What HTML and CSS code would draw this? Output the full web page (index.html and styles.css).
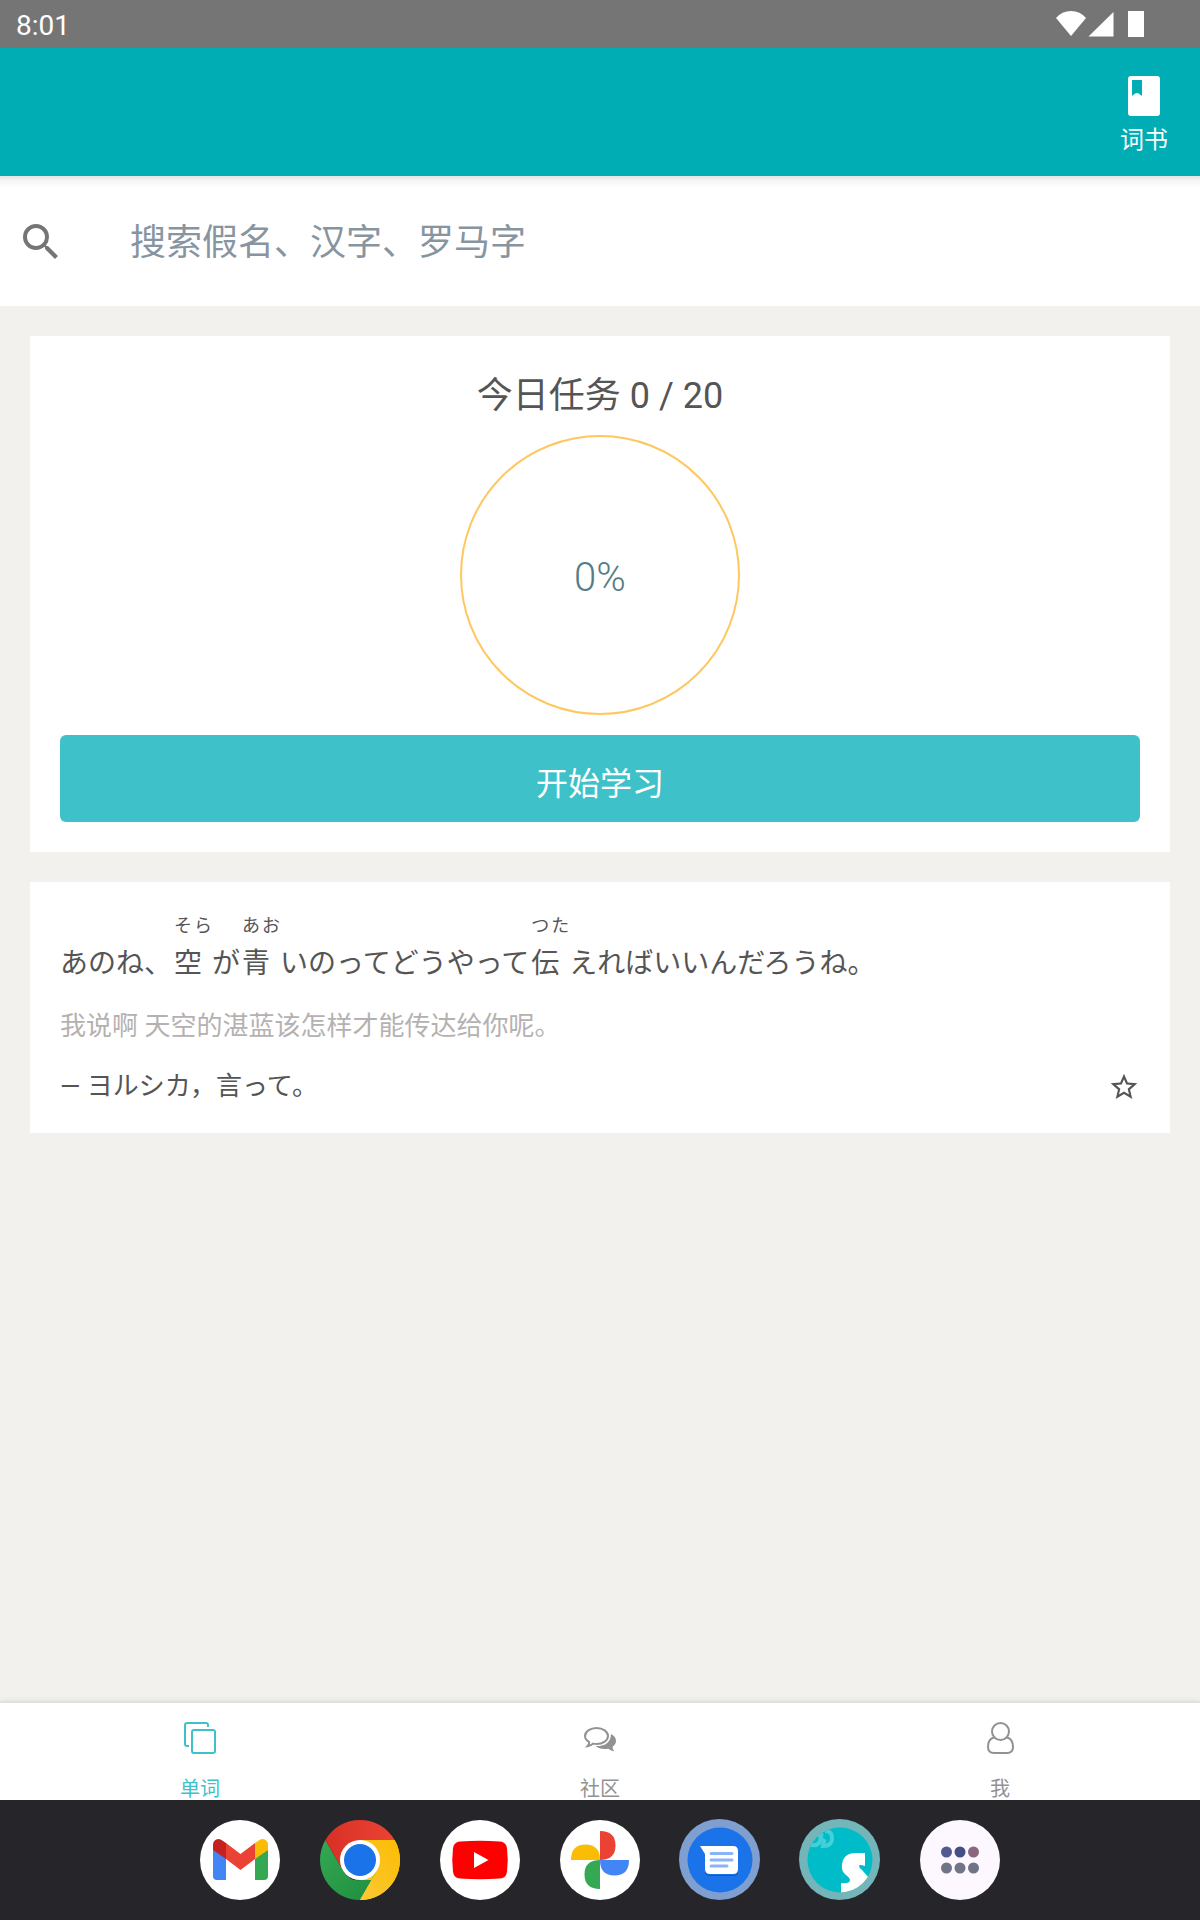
FILE: index.html
```html
<!DOCTYPE html>
<html lang="zh-CN">
<head>
<meta charset="utf-8">
<meta name="viewport" content="width=device-width, initial-scale=1">
<title>单词</title>
<link rel="stylesheet" href="styles.css">
</head>
<body>
<div class="status">
  <time class="clock">8:01</time>
  <svg class="status-icons" width="88" height="26" viewBox="0 0 88 26" fill="#fff" aria-hidden="true">
    <path d="M15 25 0 7Q6 0 15 0T30 7Z"/>
    <path d="M32.500 25.500 57.500 1v24.500Z"/>
    <path d="M72 0h16v26H72z"/>
  </svg>
</div>
<header class="appbar">
  <a class="book-link" href="#books">
    <svg width="48" height="48" viewBox="0 0 24 24" fill="#fff" aria-hidden="true"><path d="M18.500 2h-13Q4 2 4 3.500v17Q4 22 5.500 22h13q1.500 0 1.500-1.500v-17Q20 2 18.500 2zM6 4h5v8l-1.600-1.200q-.9-.6-1.800 0L6 12z"/></svg>
    <span>词书</span>
  </a>
</header>
<form class="search" role="search">
  <svg width="48" height="48" viewBox="0 0 24 24" fill="#757575" aria-hidden="true"><path d="M15.500 14h-.79l-.28-.27A6.470 6.470 0 0 0 16 9.500 6.500 6.500 0 1 0 9.500 16c1.610 0 3.090-.59 4.230-1.570l.27.28v.79l5 4.990L20.490 19l-4.990-5zm-6 0C7.010 14 5 11.990 5 9.500S7.010 5 9.500 5 14 7.010 14 9.500 11.990 14 9.500 14z"/></svg>
  <input class="search-input" type="search" aria-label="搜索" placeholder="搜索假名、汉字、罗马字">
</form>
<main class="content">
  <section class="card task">
    <h1 class="task-title">今日任务 0 / 20</h1>
    <div class="ring">0%</div>
    <button class="start" type="button">开始学习</button>
  </section>
  <section class="card quote">
    <p class="sentence" lang="ja"><span>あのね、</span><span class="word"><span class="kana">そら</span>空</span><span>が</span><span class="word"><span class="kana">あお</span>青</span><span>いのってどうやって</span><span class="word"><span class="kana">つた</span>伝</span><span>えればいいんだろうね。</span></p>
    <p class="translation">我说啊 天空的湛蓝该怎样才能传达给你呢。</p>
    <div class="source">
      <span>— ヨルシカ，言って。</span>
      <button class="star" type="button" aria-label="收藏">
        <svg width="32" height="32" viewBox="0 0 24 24" fill="#555" aria-hidden="true"><path d="M22 9.240l-7.190-.62L12 2 9.190 8.630 2 9.240l5.460 4.730L5.820 21 12 17.270 18.180 21l-1.630-7.030L22 9.240zM12 15.400l-3.760 2.270 1-4.280-3.320-2.880 4.380-.38L12 6.100l1.710 4.040 4.380.38-3.320 2.880 1 4.280L12 15.400z"/></svg>
      </button>
    </div>
  </section>
</main>
<nav class="tabs">
  <a class="tab active" href="#words" aria-current="page">
    <svg width="34" height="34" viewBox="0 0 34 34" fill="none" stroke="currentColor" stroke-width="2" aria-hidden="true"><rect x="9" y="9" width="23" height="23" rx="2"/><path d="M25 6V4q0-2-2-2H4Q2 2 2 4v19q0 2 2 2h2"/></svg>
    <span>单词</span>
  </a>
  <a class="tab" href="#community">
    <svg width="34" height="34" viewBox="0 0 34 34" aria-hidden="true"><path d="M13.500 7C20 7 25 10.600 25 15s-5 8-11.500 8q-1.800 0-3.300-.4Q7.500 25 4.500 25.300 6.200 23.500 6.200 21 2 18.500 2 15C2 10.600 7 7 13.500 7z" fill="none" stroke="currentColor" stroke-width="2"/><path d="M28 13q5 2.500 5 7 0 3.300-3.500 5.700.2 3 1.700 4.500-3.200-.3-5.900-2.400-8.100 1.200-12.800-2.700Q27.500 25.600 28 13z" fill="currentColor"/></svg>
    <span>社区</span>
  </a>
  <a class="tab" href="#me">
    <svg width="34" height="34" viewBox="0 0 34 34" fill="none" stroke="currentColor" stroke-width="2" aria-hidden="true"><circle cx="17.500" cy="10.500" r="8.500"/><path d="M11 16.500Q5 18 5 26q0 6 6 6h13q6 0 6-6 0-8-6-9.500"/></svg>
    <span>我</span>
  </a>
</nav>
<nav class="dock" aria-label="应用">
  <a href="#gmail" aria-label="Gmail"><svg viewBox="0 0 80 80"><circle cx="40" cy="40" r="40" fill="#fff"/><path d="M13 29 26 38V60H17q-4 0-4-4z" fill="#4285f4"/><path d="M68 29 55 38V60h9q4 0 4-4z" fill="#34a853"/><path d="M26 23 40.500 34 55 23V39L40.500 50 26 39z" fill="#ea4335"/><path d="M13 30v-5q0-5 5-6 3 0 5 2l3 2v16z" fill="#c5221f"/><path d="M68 30v-5q0-5-5-6-3 0-5 2l-3 2v16z" fill="#fbbc04"/></svg></a>
  <a href="#chrome" aria-label="Chrome"><svg viewBox="0 0 80 80"><defs><linearGradient id="cr"><stop stop-color="#d93025"/><stop offset="1" stop-color="#ea4335"/></linearGradient><linearGradient id="cg" x1="1" y1="1" x2="0" y2="0"><stop stop-color="#1e8e3e"/><stop offset="1" stop-color="#34a853"/></linearGradient><linearGradient id="cy" x1="0" y1="1" x2="1" y2="0"><stop stop-color="#fcc934"/><stop offset="1" stop-color="#fbbc04"/></linearGradient></defs><path d="M40 40 74.640 20A40 40 0 0 1 40 80z" fill="url(#cy)"/><path d="M40 80A40 40 0 0 1 5.360 20L22.680 50Q30 62 40 60h14L57.300 50z" fill="url(#cg)"/><path d="M57.300 50 40 80A40 40 0 0 0 74.640 20H40z" fill="url(#cy)"/><path d="M5.360 20A40 40 0 0 1 74.640 20H40L22.680 50z" fill="url(#cr)"/><circle cx="40" cy="40" r="20" fill="#fff"/><circle cx="40" cy="40" r="16" fill="#1a73e8"/></svg></a>
  <a href="#youtube" aria-label="YouTube"><svg viewBox="0 0 80 80"><circle cx="40" cy="40" r="40" fill="#fff"/><path d="M20 21.500Q40 20 60 21.500 66 22 67 28 68.500 40 67 52 66 58 60 58.500 40 60 20 58.500 14 58 13 52 11.500 40 13 28 14 22 20 21.500z" fill="red"/><path d="M34 32 48.500 40 34 48z" fill="#fff"/></svg></a>
  <a href="#photos" aria-label="Photos"><svg viewBox="0 0 80 80"><circle cx="40" cy="40" r="40" fill="#fff"/><path d="M40 11q15.500 0 15.500 14.500T40 40z" fill="#ea4335"/><path d="M69 40q0 15.500-14.500 15.500T40 40z" fill="#4285f4"/><path d="M40 69q-15.500 0-15.500-14.500T40 40z" fill="#34a853"/><path d="M11 40q0-15.500 14.500-15.500T40 40z" fill="#fbbc04"/></svg></a>
  <a href="#messages" aria-label="Messages"><svg viewBox="0 0 80 80"><circle cx="39.500" cy="39.500" r="40.500" fill="#7e9fcf"/><circle cx="40" cy="40" r="32.500" fill="#1a73e8"/><path d="M25 50q1 5 5 5h24q4 0 4-5v2q0 4-4 4H30q-4 0-5-4z" fill="#1558b8"/><path d="M20 26h33q5 0 5 5v18q0 5-5 5H30q-5 0-5-5V34z" fill="#fff"/><path d="M31 33.500h21M31 40h21M31 46h16" stroke="#8ab4f8" stroke-width="3" stroke-linecap="round"/></svg></a>
  <a href="#words-app" aria-label="单词"><svg viewBox="0 0 80 80"><defs><clipPath id="disc"><circle cx="40" cy="40" r="32.500"/></clipPath></defs><circle cx="39.500" cy="39.500" r="40.500" fill="#73b5b9"/><circle cx="40" cy="40" r="32.500" fill="#00bcc8"/><g clip-path="url(#disc)"><path d="M65 33v13q-6-2-6 0 0 2 3 4l7 8v15H41V63q9 1 9-3 0-2-4-5-5-4-4-10 1-13 16-12z" fill="#fff"/><path d="M10 24q5 3 9-1 3-5 0-9M22 13q-3 6 2 8l-1 5q9 0 9-8 0-7-7-7" fill="none" stroke="#45d0d8" stroke-width="4"/></g></svg></a>
  <a href="#apps" aria-label="全部应用"><svg viewBox="0 0 80 80"><circle cx="40" cy="40" r="40" fill="#fdf8ff"/><circle cx="26.500" cy="32" r="5.500" fill="#515b92"/><circle cx="40" cy="32" r="5.500" fill="#434e86"/><circle cx="53.500" cy="32" r="5.500" fill="#8c6680"/><circle cx="26.500" cy="48" r="5.500" fill="#707487"/><circle cx="40" cy="48" r="5.500" fill="#707487"/><circle cx="53.500" cy="48" r="5.500" fill="#707487"/></svg></a>
</nav>
</body>
</html>
```
FILE: styles.css
```css
* { box-sizing: border-box; }
body {
  margin: 0;
  min-height: 100vh;
  display: flex;
  flex-direction: column;
  background: #f2f1ed;
  color: #555;
  font-family: Roboto, "Noto Sans CJK SC", sans-serif;
}
a { color: inherit; text-decoration: none; }
button { border: 0; font: inherit; cursor: pointer; }
svg { display: block; overflow: visible; }
h1, p { margin: 0; font-weight: 400; }

.status {
  display: flex;
  align-items: center;
  justify-content: space-between;
  height: 48px;
  padding: 0 56px 0 16px;
  background: #757575;
  color: #fff;
  font-size: 28px;
  line-height: 44px;
}
.clock { padding-top: 4px; }
.appbar {
  display: flex;
  justify-content: flex-end;
  height: 128px;
  padding: 24px 32px 0;
  background: #00adb5;
  color: #fff;
}
.book-link {
  display: flex;
  flex-direction: column;
  align-items: center;
  gap: 4px;
  font-size: 24px;
  line-height: 32px;
}
.search {
  display: flex;
  align-items: center;
  gap: 65px;
  height: 130px;
  padding: 2px 17px 0;
  background: #fff linear-gradient(#e4e4e4, #f6f6f6 5px, #fff 12px);
}
.search-input {
  flex: 1;
  min-width: 0;
  padding: 2px 0 0;
  border: 0;
  outline: 0;
  background: none;
  color: #555;
  font: inherit;
  font-size: 36px;
}
.search-input::placeholder { color: #8795a1; opacity: 1; }

.content {
  flex: 1;
  display: flex;
  flex-direction: column;
  gap: 30px;
  padding: 30px;
}
.card { padding: 30px; background: #fff; }
.task {
  display: flex;
  flex-direction: column;
  align-items: center;
}
.task-title { font-size: 36px; line-height: 60px; }
.ring {
  display: grid;
  place-items: center;
  width: 280px;
  height: 280px;
  margin: 9px 0 20px;
  padding-top: 4px;
  border: 2px solid #ffc75f;
  border-radius: 50%;
  color: #577c86;
  font-size: 40px;
  font-weight: 300;
}
.start {
  width: 100%;
  height: 87px;
  padding: 4px 0 0;
  border-radius: 6px;
  background: #3fc1c9;
  color: #fff;
  font-size: 32px;
}
.quote { padding-bottom: 27px; }
.sentence {
  display: flex;
  flex-wrap: wrap;
  align-items: flex-end;
  font-size: 28px;
  line-height: 44px;
}
.word { width: 40px; padding-left: 2px; }
.kana {
  display: block;
  width: 38px;
  margin-bottom: 2px;
  font-size: 18px;
  line-height: 28px;
  text-align-last: justify;
}
.translation {
  margin: 20px 0;
  color: #b5b1b1;
  font-size: 26px;
  line-height: 40px;
}
.source {
  display: flex;
  align-items: center;
  justify-content: space-between;
  font-size: 26px;
  line-height: 40px;
}
.star { padding: 2px 0 0; background: none; }

.tabs {
  display: grid;
  grid-template-columns: repeat(3, 1fr);
  border-top: 2px solid #e0e0e0;
  background: #fff;
  box-shadow: 0 -1px 6px rgba(0, 0, 0, .06);
}
.tab {
  display: flex;
  flex-direction: column;
  align-items: center;
  gap: 23px;
  padding-top: 18px;
  color: #929292;
  font-size: 20px;
  line-height: 22px;
}
.active { color: #3fc1c9; }
.dock {
  display: flex;
  justify-content: center;
  gap: 40px;
  padding: 20px;
  background: #26252a;
}
.dock svg { width: 80px; height: 80px; }
```
